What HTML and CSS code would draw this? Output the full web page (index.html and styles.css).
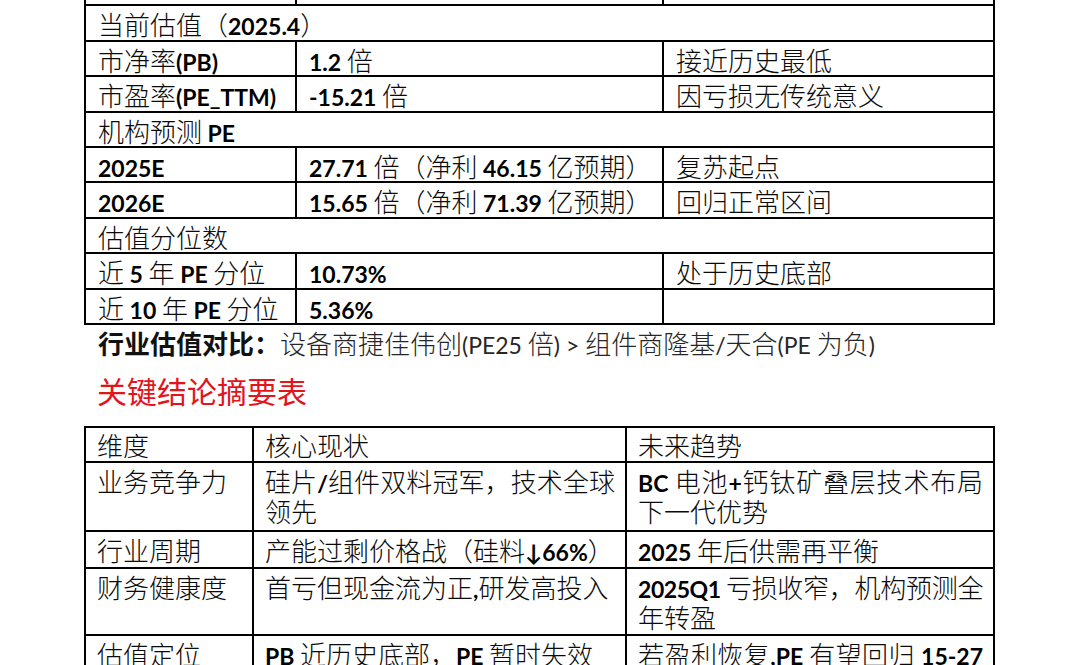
FILE: index.html
```html
<!DOCTYPE html>
<html lang="zh-CN">
<head>
<meta charset="utf-8">
<title>估值与结论</title>
<link rel="stylesheet" href="styles.css">
</head>
<body>
<div class="doc">
  <table class="t1">
    <colgroup><col class="a1"><col class="a2"><col class="a3"></colgroup>
    <tr class="cut"><td></td><td></td><td></td></tr>
    <tr><td colspan="3">当前估值（<b class="en">2025.4</b>）</td></tr>
    <tr><td>市净率<b class="en">(PB)</b></td><td><b class="en">1.2 </b>倍</td><td>接近历史最低</td></tr>
    <tr><td>市盈率<b class="en">(PE_TTM)</b></td><td><b class="en">-15.21 </b>倍</td><td>因亏损无传统意义</td></tr>
    <tr><td colspan="3">机构预测<b class="en"> PE</b></td></tr>
    <tr><td><b class="en">2025E</b></td><td><b class="en">27.71 </b>倍（净利<b class="en"> 46.15 </b>亿预期）</td><td>复苏起点</td></tr>
    <tr><td><b class="en">2026E</b></td><td><b class="en">15.65 </b>倍（净利<b class="en"> 71.39 </b>亿预期）</td><td>回归正常区间</td></tr>
    <tr><td colspan="3">估值分位数</td></tr>
    <tr><td>近<b class="en"> 5 </b>年<b class="en"> PE </b>分位</td><td><b class="en">10.73%</b></td><td>处于历史底部</td></tr>
    <tr><td>近<b class="en"> 10 </b>年<b class="en"> PE </b>分位</td><td><b class="en">5.36%</b></td><td></td></tr>
  </table>

  <p class="compare"><strong class="lead">行业估值对比：</strong>设备商捷佳伟创<span class="lt">(PE25 </span>倍<span class="lt">) &gt; </span>组件商隆基<span class="lt">/</span>天合<span class="lt">(PE </span>为负<span class="lt">)</span></p>

  <h2 class="title">关键结论摘要表</h2>

  <table class="t2">
    <colgroup><col class="b1"><col class="b2"><col class="b3"></colgroup>
    <tr class="head"><td>维度</td><td>核心现状</td><td>未来趋势</td></tr>
    <tr class="two"><td>业务竞争力</td><td><span class="jl">硅片<b class="en">/</b>组件双料冠军，技术全球</span>领先</td><td><span class="jl"><b class="en">BC </b>电池<b class="en">+</b>钙钛矿叠层技术布局</span>下一代优势</td></tr>
    <tr><td>行业周期</td><td>产能过剩价格战（硅料<b class="en">↓66%</b>）</td><td><b class="en">2025 </b>年后供需再平衡</td></tr>
    <tr><td>财务健康度</td><td>首亏但现金流为正<b class="en">,</b>研发高投入</td><td><span class="jl tight"><b class="en">2025Q1 </b>亏损收窄，机构预测全</span>年转盈</td></tr>
    <tr><td>估值定位</td><td><b class="en">PB </b>近历史底部，<b class="en">PE </b>暂时失效</td><td><span class="jl">若盈利恢复<b class="en">,PE </b>有望回归<b class="en"> 15-27</b></span></td></tr>
  </table>
</div>
</body>
</html>
```

FILE: styles.css
```css
html, body {
  margin: 0;
  padding: 0;
  background: #ffffff;
}

body {
  color: #000000;
  font-family: "Noto Sans CJK SC", "Noto Sans", sans-serif;
  overflow: hidden;
}

.doc {
  padding-left: 84px;
}

table {
  border-collapse: collapse;
  table-layout: fixed;
}

td {
  border: 2px solid #000000;
  font-size: 26px;
  font-weight: 300;
  line-height: 30px;
  white-space: nowrap;
  vertical-align: top;
  color: #0a0a0a;
}

.en {
  font-family: "Lato", "Noto Sans CJK SC", sans-serif;
  font-weight: 700;
  font-size: 23px;
  line-height: 20px;
  color: #000000;
}

/* Table 1 */
.t1 {
  width: 911px;
  margin-top: -31px;
}

.a1 { width: 211px; }
.a2 { width: 367px; }
.a3 { width: 331px; }

.t1 td {
  height: 30.4px;
  padding: 3px 10px 0 12px;
}

/* comparison line */
.compare {
  margin: 0;
  padding-left: 14px;
  font-size: 26px;
  line-height: 36px;
  color: #262626;
  font-weight: 300;
  white-space: nowrap;
}

.lead {
  font-weight: 700;
  color: #111111;
}

.lt {
  font-family: "Lato", "Noto Sans CJK SC", sans-serif;
  font-weight: 400;
  font-size: 23px;
  line-height: 20px;
}

/* heading */
.title {
  margin: 9px 0 16px 0;
  padding-left: 13px;
  font-size: 30px;
  line-height: 40px;
  font-weight: 400;
  color: #e3141b;
}

/* Table 2 */
.t2 {
  width: 911px;
}

.b1 { width: 168px; }
.b2 { width: 373px; }
.b3 { width: 368px; }

.t2 td {
  height: 30px;
  padding: 3px 10px 2px 11px;
}

.t2 .head td {
  padding-top: 2px;
  padding-bottom: 1px;
}

.t2 .two td {
  padding-bottom: 4px;
}

.jl {
  display: block;
  text-align: justify;
  text-align-last: justify;
  white-space: nowrap;
}

.tight {
  letter-spacing: -0.45px;
}
```
